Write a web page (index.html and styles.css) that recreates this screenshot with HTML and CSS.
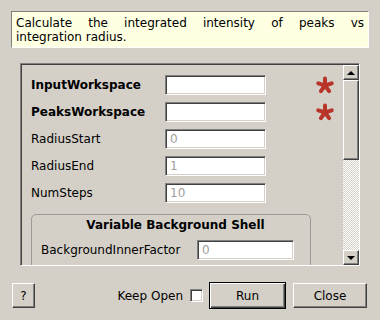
FILE: index.html
```html
<!DOCTYPE html>
<html lang="en">
<head>
  <meta charset="UTF-8">
  <meta name="viewport" content="width=device-width, initial-scale=1.0">
  <title>IntegratePeaksCheck</title>
  <link rel="stylesheet" href="styles.css">
</head>
<body>
  <div class="dialog">
    <div class="desc">
      <span class="line">Calculate the integrated intensity of peaks vs</span>
      integration radius.
    </div>

    <div class="scroll">
      <div class="content">
        <div class="props">
          <label class="name bold">InputWorkspace</label>
          <input type="text" class="field">
          <svg class="star" width="18" height="18" viewBox="0 0 18 18"><g stroke="#b8352a" stroke-width="4" stroke-linecap="round"><line x1="9" y1="9.5" x2="9" y2="2.5"/><line x1="9" y1="9.5" x2="15.7" y2="7.3"/><line x1="9" y1="9.5" x2="13.1" y2="15.2"/><line x1="9" y1="9.5" x2="4.9" y2="15.2"/><line x1="9" y1="9.5" x2="2.3" y2="7.3"/></g></svg>

          <label class="name bold">PeaksWorkspace</label>
          <input type="text" class="field">
          <svg class="star" width="18" height="18" viewBox="0 0 18 18"><g stroke="#b8352a" stroke-width="4" stroke-linecap="round"><line x1="9" y1="9.5" x2="9" y2="2.5"/><line x1="9" y1="9.5" x2="15.7" y2="7.3"/><line x1="9" y1="9.5" x2="13.1" y2="15.2"/><line x1="9" y1="9.5" x2="4.9" y2="15.2"/><line x1="9" y1="9.5" x2="2.3" y2="7.3"/></g></svg>

          <label class="name">RadiusStart</label>
          <input type="text" class="field" placeholder="0">
          <span></span>

          <label class="name">RadiusEnd</label>
          <input type="text" class="field" placeholder="1">
          <span></span>

          <label class="name">NumSteps</label>
          <input type="text" class="field" placeholder="10">
          <span></span>
        </div>

        <div class="group">
          <div class="group-title">Variable Background Shell</div>
          <div class="group-row">
            <label class="name wide">BackgroundInnerFactor</label>
            <input type="text" class="field short" placeholder="0">
          </div>
        </div>
      </div>

      <div class="scrollbar">
        <div class="arrow up"><span></span></div>
        <div class="handle"></div>
        <div class="trough"></div>
        <div class="arrow down"><span></span></div>
      </div>
    </div>

    <div class="footer">
      <button class="btn help">?</button>
      <div class="spacer"></div>
      <span class="keep">Keep Open</span>
      <span class="check"></span>
      <button class="btn run">Run</button>
      <button class="btn close">Close</button>
    </div>
  </div>
</body>
</html>
```

FILE: styles.css
```css
body {
  margin: 0;
  background-color: #d4d0c8;
  font-family: "DejaVu Sans", sans-serif;
  font-size: 12px;
  color: #000;
}
.dialog {
  width: 380px;
  height: 320px;
  display: flex;
  flex-direction: column;
}
.desc {
  margin: 11px 11px 0 11px;
  height: 37px;
  box-sizing: border-box;
  padding: 4px 4px 3px 4px;
  line-height: 14px;
  background-color: #ffffe1;
  border: 1px solid;
  border-color: #808080 #ffffff #ffffff #808080;
}
.desc .line {
  display: block;
  text-align: justify;
  text-align-last: justify;
}
.scroll {
  margin: 15px 20px 0 20px;
  height: 203px;
  box-sizing: border-box;
  display: flex;
  border: 1px solid;
  border-color: #808080 #ffffff #ffffff #808080;
  box-shadow: inset 1px 1px #404040;
  padding: 1px 0 0 1px;
  overflow: hidden;
}
.content {
  flex: 1;
  padding: 10px 0 0 9px;
  overflow: hidden;
}
.props {
  display: grid;
  grid-template-columns: 128px 101px 1fr;
  grid-auto-rows: 20px;
  column-gap: 6px;
  row-gap: 7px;
  align-items: center;
}
.name {
  white-space: nowrap;
}
.bold {
  font-weight: bold;
}
.field {
  height: 20px;
  box-sizing: border-box;
  margin: 0;
  padding: 0 0 0 4px;
  font-family: inherit;
  font-size: 12px;
  background: #fff;
  border: 1px solid;
  border-color: #808080 #ffffff #ffffff #808080;
  box-shadow: inset 1px 1px #404040, inset -1px -1px #d4d0c8;
  outline: none;
}
.field::placeholder {
  color: #a0a0a0;
}
.star {
  margin-left: 44px;
}
.group {
  margin-top: 11px;
  width: 280px;
  height: 80px;
  box-sizing: border-box;
  border: 1px solid #9c9a94;
  border-radius: 5px;
  padding: 3px 0 0 9px;
}
.group-title {
  font-weight: bold;
  text-align: center;
  line-height: 14px;
  margin-bottom: 8px;
}
.group-row {
  display: flex;
  align-items: center;
}
.group-row .wide {
  width: 156px;
}
.group-row .short {
  width: 97px;
}
.scrollbar {
  width: 16px;
  display: flex;
  flex-direction: column;
}
.arrow {
  height: 15px;
  box-sizing: border-box;
  display: flex;
  align-items: center;
  justify-content: center;
  border: 1px solid;
  border-color: #ffffff #404040 #404040 #ffffff;
  box-shadow: inset -1px -1px #808080;
}
.arrow span {
  width: 0;
  height: 0;
  border-left: 4px solid transparent;
  border-right: 4px solid transparent;
}
.up span {
  border-bottom: 4px solid #000;
}
.down span {
  border-top: 4px solid #000;
}
.handle {
  height: 80px;
  box-sizing: border-box;
  border: 1px solid;
  border-color: #ffffff #404040 #404040 #ffffff;
  box-shadow: inset -1px -1px #808080;
}
.trough {
  flex: 1;
  background: repeating-conic-gradient(#ffffff 0 25%, #d4d0c8 0 50%) 0 0 / 2px 2px;
}
.footer {
  margin-top: 16px;
  padding: 0 13px 0 12px;
  display: flex;
  align-items: center;
}
.spacer {
  flex: 1;
}
.btn {
  height: 25px;
  box-sizing: border-box;
  margin: 0;
  padding: 0;
  font-family: inherit;
  font-size: 12px;
  color: #000;
  background-color: #d4d0c8;
  border: 1px solid;
  border-color: #ffffff #404040 #404040 #ffffff;
  box-shadow: inset -1px -1px #808080;
  cursor: pointer;
}
.help {
  width: 23px;
}
.keep {
  margin-right: 7px;
}
.check {
  width: 13px;
  height: 13px;
  box-sizing: border-box;
  background: #fff;
  border: 1px solid;
  border-color: #808080 #ffffff #ffffff #808080;
  box-shadow: inset 1px 1px #404040, inset -1px -1px #d4d0c8;
}
.run {
  width: 77px;
  height: 27px;
  margin-left: 6px;
  border: 1px solid #000;
  box-shadow: inset 1px 1px #ffffff, inset -1px -1px #404040, inset -2px -2px #808080;
}
.close {
  width: 74px;
  margin-left: 7px;
}
```
